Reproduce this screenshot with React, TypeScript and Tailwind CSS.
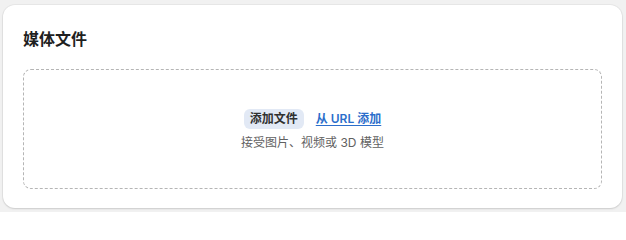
import React from 'react';

const App: React.FC = () => {
  return (
    <div
      className="w-[626px] h-[212px] bg-[#f1f1f1] pt-[5px] pl-[3px] pr-[4px]"
      style={{ fontFamily: 'Inter, "Noto Sans CJK SC", sans-serif' }}
    >
      <div className="h-[203px] bg-white rounded-[12px] shadow-[0_1px_2px_0_rgba(0,0,0,0.12),0_0_0_1px_rgba(0,0,0,0.04)] px-[20px] pt-[22px]">
        {/* Title */}
        <h2 className="text-[16px] leading-[24px] font-semibold text-[#1f1f1f]">媒体文件</h2>
        {/* Drop zone */}
        <div className="mt-[18px] h-[120px] border border-dashed border-[#b5b5b5] rounded-[8px] flex flex-col items-center justify-center">
          <div className="flex items-center gap-[12px] mt-[2px]">
            <button className="h-[20px] px-[6px] rounded-[6px] bg-[#e2e9f5] text-[12px] leading-[16px] font-semibold text-[#303030]">
              添加文件
            </button>
            <a className="text-[12px] leading-[16px] font-semibold text-[#2c6ecb] underline underline-offset-2">
              从 URL 添加
            </a>
          </div>
          <p className="mt-[6px] text-[12px] leading-[16px] text-[#616161]">接受图片、视频或 3D 模型</p>
        </div>
      </div>
    </div>
  );
};

export default App;
